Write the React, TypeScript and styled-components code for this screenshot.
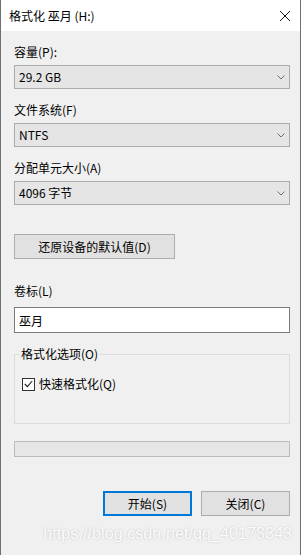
import styled, { createGlobalStyle } from "styled-components";

const GlobalStyle = createGlobalStyle`
  html, body {
    margin: 0;
    padding: 0;
    background: #f0f0f0;
  }
  * {
    box-sizing: border-box;
  }
`;

const Window = styled.div`
  display: flex;
  flex-direction: column;
  width: 301px;
  height: 555px;
  background: #f0f0f0;
  border-left: 1px solid #707070;
  border-right: 1px solid #707070;
  font-family: "Noto Sans CJK SC", "Microsoft YaHei", sans-serif;
  font-size: 12px;
  color: #000;
  overflow: hidden;
`;

const TitleBar = styled.div`
  display: flex;
  align-items: center;
  justify-content: space-between;
  height: 31px;
  padding: 0 10px 0 8px;
  background: #ffffff;
`;

const Title = styled.span`
  font-size: 12px;
  line-height: 16px;
`;

const CloseIcon = styled.svg`
  width: 10px;
  height: 10px;
  stroke: #111;
  stroke-width: 1;
`;

const Body = styled.div`
  display: flex;
  flex-direction: column;
  flex: 1;
  padding: 13px 10px 0 13px;
`;

const Label = styled.div<{ $gap?: number }>`
  margin-top: ${(p) => p.$gap ?? 0}px;
  line-height: 16px;
`;

const Combo = styled.div`
  display: flex;
  align-items: center;
  justify-content: space-between;
  height: 24px;
  margin-top: 5px;
  padding: 0 4px 0 4px;
  background: #e5e5e5;
  border: 1px solid #acacac;
  line-height: 16px;
`;

const Chevron = styled.svg`
  width: 8px;
  height: 5px;
  fill: none;
  stroke: #707070;
  stroke-width: 1;
`;

const Button = styled.div<{ $primary?: boolean }>`
  display: flex;
  align-items: center;
  justify-content: center;
  height: 25px;
  background: #e1e1e1;
  border: 1px solid ${(p) => (p.$primary ? "#0078d7" : "#adadad")};
  box-shadow: ${(p) => (p.$primary ? "inset 0 0 0 1px #0078d7" : "none")};
  line-height: 16px;
`;

const ResetButton = styled(Button)`
  width: 161px;
  margin-top: 29px;
`;

const TextInput = styled.div`
  display: flex;
  align-items: center;
  height: 26px;
  margin-top: 8px;
  padding: 0 4px;
  background: #ffffff;
  border: 1px solid #7a7a7a;
`;

const Group = styled.fieldset`
  margin: 13px 0 0;
  padding: 14px 7px 0 7px;
  height: 78px;
  border: 1px solid #dcdcdc;
  min-inline-size: 0;
`;

const Legend = styled.legend`
  margin-left: -3px;
  padding: 0 2px;
  line-height: 16px;
  color: #000;
`;

const CheckRow = styled.div`
  display: flex;
  align-items: center;
  gap: 4px;
  line-height: 16px;
`;

const CheckBox = styled.div`
  display: flex;
  align-items: center;
  justify-content: center;
  width: 13px;
  height: 13px;
  background: #ffffff;
  border: 1px solid #333;
`;

const Progress = styled.div`
  height: 16px;
  margin-top: 17px;
  background: #e6e6e6;
  border: 1px solid #bcbcbc;
`;

const Footer = styled.div`
  display: flex;
  justify-content: flex-end;
  gap: 9px;
  margin-top: 34px;
`;

const FooterButton = styled(Button)`
  width: 89px;
`;

const Watermark = styled.div`
  align-self: flex-end;
  margin-top: 8px;
  margin-right: -2px;
  font-family: "Liberation Sans", Arial, sans-serif;
  font-size: 16px;
  line-height: 20px;
  color: rgba(255, 255, 255, 0.95);
  text-shadow: 0 0 2px rgba(0, 0, 0, 0.22);
  letter-spacing: 0.1px;
`;

const DropDown = ({ value }: { value: string }) => (
  <Combo>
    <span>{value}</span>
    <Chevron viewBox="0 0 8 5">
      <polyline points="0.5,0.5 4,4 7.5,0.5" />
    </Chevron>
  </Combo>
);

export default function App() {
  return (
    <>
      <GlobalStyle />
      <Window>
        <TitleBar>
          <Title>格式化 巫月 (H:)</Title>
          <CloseIcon viewBox="0 0 10 10">
            <line x1="0" y1="0" x2="10" y2="10" />
            <line x1="10" y1="0" x2="0" y2="10" />
          </CloseIcon>
        </TitleBar>
        <Body>
          <Label>容量(P):</Label>
          <DropDown value="29.2 GB" />
          <Label $gap={13}>文件系统(F)</Label>
          <DropDown value="NTFS" />
          <Label $gap={13}>分配单元大小(A)</Label>
          <DropDown value="4096 字节" />
          <ResetButton>还原设备的默认值(D)</ResetButton>
          <Label $gap={24}>卷标(L)</Label>
          <TextInput>巫月</TextInput>
          <Group>
            <Legend>格式化选项(O)</Legend>
            <CheckRow>
              <CheckBox>
                <svg width="9" height="8" viewBox="0 0 9 8">
                  <polyline
                    points="0.8,4 3.4,6.6 8.2,1"
                    fill="none"
                    stroke="#222"
                    strokeWidth="1.1"
                  />
                </svg>
              </CheckBox>
              <span>快速格式化(Q)</span>
            </CheckRow>
          </Group>
          <Progress />
          <Footer>
            <FooterButton $primary>开始(S)</FooterButton>
            <FooterButton>关闭(C)</FooterButton>
          </Footer>
          <Watermark>https://blog.csdn.net/qq_40178343</Watermark>
        </Body>
      </Window>
    </>
  );
}
